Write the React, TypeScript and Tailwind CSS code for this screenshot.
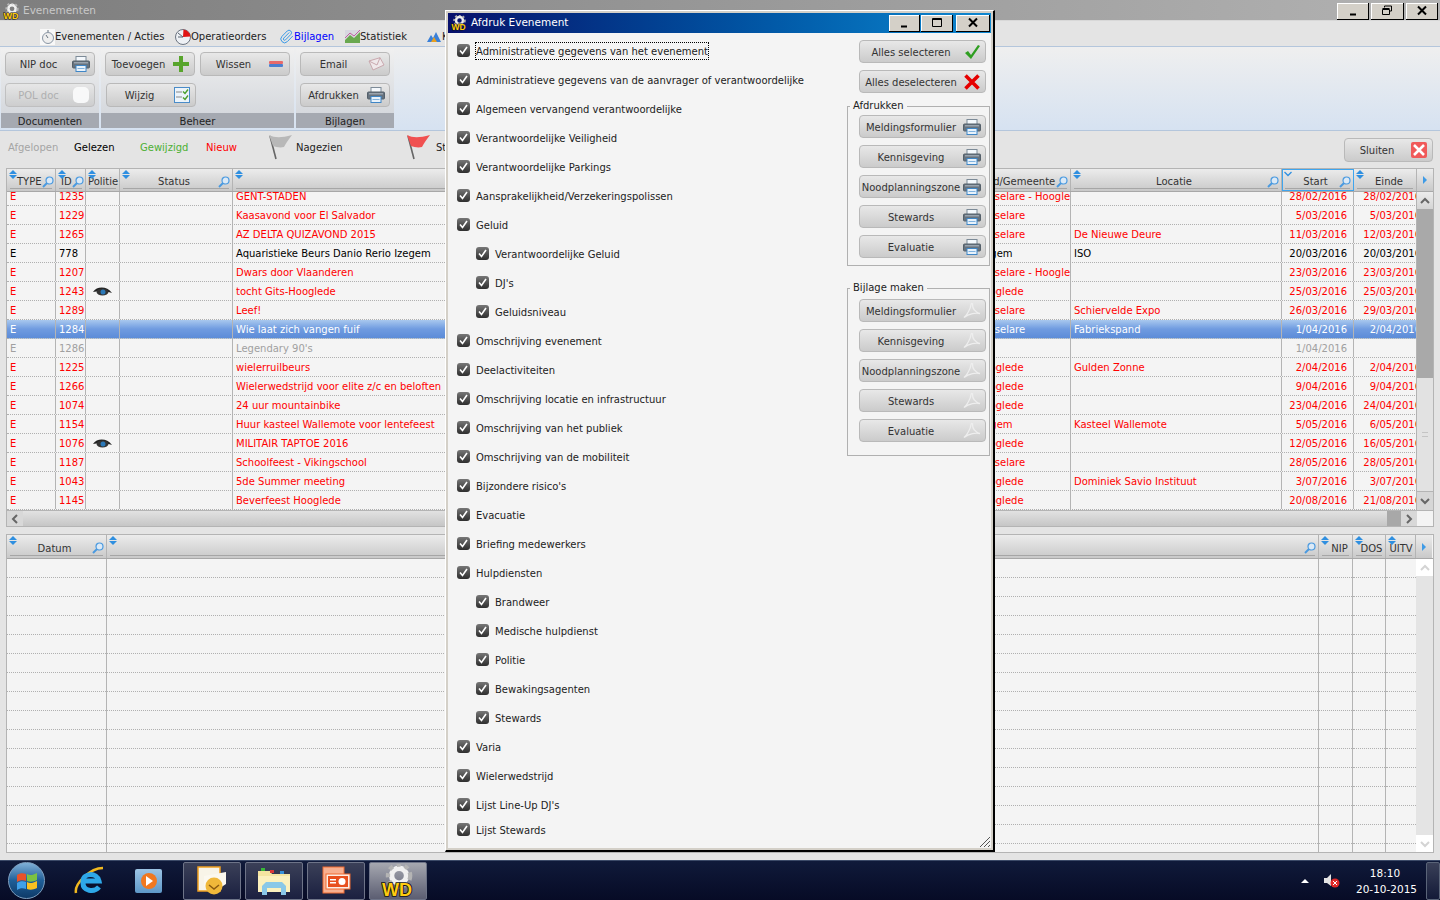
import React from 'react';
import { Paperclip } from 'lucide-react';

type Tone = 'red' | 'black' | 'grey' | 'sel';

const ROWS: { id: string; title: string; city: string; loc: string; start: string; end: string; tone: Tone; eye?: boolean }[] = [
  { id: '1235', title: 'GENT-STADEN', city: 'Roeselare - Hooglede', loc: '', start: '28/02/2016', end: '28/02/2016', tone: 'red' },
  { id: '1229', title: 'Kaasavond voor El Salvador', city: 'Roeselare', loc: '', start: '5/03/2016', end: '5/03/2016', tone: 'red' },
  { id: '1265', title: 'AZ DELTA QUIZAVOND 2015', city: 'Roeselare', loc: 'De Nieuwe Deure', start: '11/03/2016', end: '12/03/2016', tone: 'red' },
  { id: '778', title: 'Aquaristieke Beurs Danio Rerio Izegem', city: 'Izegem', loc: 'ISO', start: '20/03/2016', end: '20/03/2016', tone: 'black' },
  { id: '1207', title: 'Dwars door Vlaanderen', city: 'Roeselare - Hooglede', loc: '', start: '23/03/2016', end: '23/03/2016', tone: 'red' },
  { id: '1243', title: 'tocht Gits-Hooglede', city: 'Hooglede', loc: '', start: '25/03/2016', end: '25/03/2016', tone: 'red', eye: true },
  { id: '1289', title: 'Leef!', city: 'Roeselare', loc: 'Schiervelde Expo', start: '26/03/2016', end: '29/03/2016', tone: 'red' },
  { id: '1284', title: 'Wie laat zich vangen fuif', city: 'Roeselare', loc: 'Fabriekspand', start: '1/04/2016', end: '2/04/2016', tone: 'sel' },
  { id: '1286', title: "Legendary 90's", city: '', loc: '', start: '1/04/2016', end: '', tone: 'grey' },
  { id: '1225', title: 'wielerruilbeurs', city: 'Hooglede', loc: 'Gulden Zonne', start: '2/04/2016', end: '2/04/2016', tone: 'red' },
  { id: '1266', title: 'Wielerwedstrijd voor elite z/c en beloften', city: 'Hooglede', loc: '', start: '9/04/2016', end: '9/04/2016', tone: 'red' },
  { id: '1074', title: '24 uur mountainbike', city: 'Hooglede', loc: '', start: '23/04/2016', end: '24/04/2016', tone: 'red' },
  { id: '1154', title: 'Huur kasteel Wallemote voor lentefeest', city: 'Izegem', loc: 'Kasteel Wallemote', start: '5/05/2016', end: '6/05/2016', tone: 'red' },
  { id: '1076', title: 'MILITAIR TAPTOE 2016', city: 'Hooglede', loc: '', start: '12/05/2016', end: '16/05/2016', tone: 'red', eye: true },
  { id: '1187', title: 'Schoolfeest - Vikingschool', city: 'Roeselare', loc: '', start: '28/05/2016', end: '28/05/2016', tone: 'red' },
  { id: '1043', title: '5de Summer meeting', city: 'Hooglede', loc: 'Dominiek Savio Instituut', start: '3/07/2016', end: '3/07/2016', tone: 'red' },
  { id: '1145', title: 'Beverfeest Hooglede', city: 'Hooglede', loc: '', start: '20/08/2016', end: '21/08/2016', tone: 'red' },
];

const CHECKS: { label: string; sub?: boolean }[] = [
  { label: 'Administratieve gegevens van het evenement' },
  { label: 'Administratieve gegevens van de aanvrager of verantwoordelijke' },
  { label: 'Algemeen vervangend verantwoordelijke' },
  { label: 'Verantwoordelijke Veiligheid' },
  { label: 'Verantwoordelijke Parkings' },
  { label: 'Aansprakelijkheid/Verzekeringspolissen' },
  { label: 'Geluid' },
  { label: 'Verantwoordelijke Geluid', sub: true },
  { label: "DJ's", sub: true },
  { label: 'Geluidsniveau', sub: true },
  { label: 'Omschrijving evenement' },
  { label: 'Deelactiviteiten' },
  { label: 'Omschrijving locatie en infrastructuur' },
  { label: 'Omschrijving van het publiek' },
  { label: 'Omschrijving van de mobiliteit' },
  { label: "Bijzondere risico's" },
  { label: 'Evacuatie' },
  { label: 'Briefing medewerkers' },
  { label: 'Hulpdiensten' },
  { label: 'Brandweer', sub: true },
  { label: 'Medische hulpdienst', sub: true },
  { label: 'Politie', sub: true },
  { label: 'Bewakingsagenten', sub: true },
  { label: 'Stewards', sub: true },
  { label: 'Varia' },
  { label: 'Wielerwedstrijd' },
  { label: "Lijst Line-Up DJ's" },
];

const FORMS = ['Meldingsformulier', 'Kennisgeving', 'Noodplanningszone', 'Stewards', 'Evaluatie'];

const toneClass: Record<Tone, string> = {
  red: 'text-[#ff0000]',
  black: 'text-black',
  grey: 'text-[#a0a0a0]',
  sel: 'text-white bg-gradient-to-b from-[#a9c8ee] via-[#6f9be0] to-[#5c8cd8]',
};

function Printer() {
  return (
    <svg width="18" height="16" viewBox="0 0 18 16">
      <rect x="4" y="0.5" width="10" height="5" fill="#f4f8fc" stroke="#7d8b98" />
      <rect x="0.5" y="5" width="17" height="7" rx="1" fill="#66727e" stroke="#55606a" />
      <rect x="2" y="6" width="14" height="1.5" fill="#9aa4ae" />
      <rect x="4" y="9.5" width="10" height="6" fill="#e8f2fb" stroke="#3f86c6" />
      <rect x="5.5" y="12" width="7" height="1" fill="#7fb2de" />
    </svg>
  );
}

function Acrobat() {
  return (
    <svg width="18" height="17" viewBox="0 0 18 17" fill="none">
      <path d="M1 15.5C4 13 7.5 7 8 2.5 8.2 0.8 9.8 1 9.6 3 9.3 6 12 10 17 11.5 13 10.5 6 11.5 1 15.5Z" stroke="#eeeeee" strokeWidth="1.3" />
    </svg>
  );
}

// gear with the yellow WD letters, used in both title bars and the taskbar
function WdLogo({ size = 16 }: { size?: number }) {
  return (
    <svg width={size} height={size} viewBox="0 0 32 32">
      <circle cx="17" cy="11" r="7" fill="none" stroke="#f0f0f0" strokeWidth="5" />
      <circle cx="17" cy="11" r="10.5" fill="none" stroke="#b4b4b4" strokeWidth="4" strokeDasharray="4 3.8" />
      <text x="1" y="30" fontFamily="Liberation Sans, sans-serif" fontWeight="700" fontSize="17" fill="#ffcc10" stroke="#111111" strokeWidth="1.6" paintOrder="stroke">WD</text>
    </svg>
  );
}

function Btn({ label, icon, className = '', disabled }: { label: string; icon?: React.ReactNode; className?: string; disabled?: boolean }) {
  return (
    <div className={`flex items-center rounded-[4px] border border-[#b9b9b9] bg-gradient-to-b from-[#e8e8e8] to-[#cbcbcb] pr-[3px] ${disabled ? 'text-[#a4a4a4] opacity-80' : 'text-[#333333]'} ${className}`}>
      <span className="flex-1 whitespace-nowrap pt-px text-center">{label}</span>
      {icon && <span className="flex w-[20px] shrink-0 justify-center">{icon}</span>}
    </div>
  );
}

function SortArrows({ active }: { active?: boolean }) {
  return (
    <svg width="8" height="9" viewBox="0 0 8 9" fill="none" className="absolute left-[2px] top-[1px]">
      {active ? (
        <path d="M0.5 2 4 5.5 7.5 2" stroke="#2f8fe0" strokeWidth="1.3" />
      ) : (
        <>
          <path d="M4 0 8 4H0Z" fill="#2f8fe0" />
          <path d="M4 9 0 5H8Z" fill="#2f8fe0" />
        </>
      )}
    </svg>
  );
}

function Lens() {
  return (
    <svg width="12" height="12" viewBox="0 0 12 12" fill="none" className="shrink-0">
      <circle cx="7.5" cy="4.5" r="3.5" fill="#dbe9f6" stroke="#4a9ae0" strokeWidth="1.2" />
      <path d="M5 7 1 11" stroke="#4a9ae0" strokeWidth="2" />
    </svg>
  );
}

function HeadCell({ label, lens = true, active, pad = 'pl-[10px]' }: { label?: string; lens?: boolean; active?: boolean; pad?: string }) {
  return (
    <div className={`relative flex h-full items-center overflow-hidden border-r border-[#b4b4b4] bg-gradient-to-b from-[#ececec] to-[#c9c9c9] pr-[2px] pt-[3px] text-[#333333] ${pad} ${active ? 'outline outline-1 -outline-offset-1 outline-[#3fa5ee]' : ''}`}>
      <SortArrows active={active} />
      <span className="flex-1 whitespace-nowrap text-center">{label}</span>
      {lens && <Lens />}
      <span className="absolute bottom-[2px] left-[3px] right-[3px] h-px bg-[#a6a6a6]" />
    </div>
  );
}

function HeadEnd() {
  return (
    <div className="relative flex h-full w-[16px] items-center justify-center bg-gradient-to-b from-[#ececec] to-[#c9c9c9]">
      <span className="h-0 w-0 border-y-[4px] border-l-[4px] border-y-transparent border-l-[#3f9be6]" />
    </div>
  );
}

function Chevron({ dir, light }: { dir: 'up' | 'down' | 'left' | 'right'; light?: boolean }) {
  const d = { up: 'M2 8 6 4l4 4', down: 'M2 4l4 4 4-4', left: 'M8 2 4 6l4 4', right: 'M4 2l4 4-4 4' }[dir];
  return (
    <svg width="12" height="12" viewBox="0 0 12 12" fill="none">
      <path d={d} stroke={light ? '#d4d4d4' : '#666666'} strokeWidth="2" />
    </svg>
  );
}

function CheckRow({ label, sub, focus, className = '' }: { label: string; sub?: boolean; focus?: boolean; className?: string }) {
  return (
    <div className={`flex h-[29px] items-center ${sub ? 'pl-[19px]' : ''} ${className}`}>
      <span className="flex h-[13px] w-[13px] items-center justify-center rounded-[3px] bg-gradient-to-b from-[#777777] to-[#2f2f2f]">
        <svg width="9" height="9" viewBox="0 0 9 9" fill="none">
          <path d="M1 4.5 3.5 7.5 8 1" stroke="#ffffff" strokeWidth="1.6" />
        </svg>
      </span>
      <span className={`ml-[6px] whitespace-nowrap pt-px text-[#222222] ${focus ? 'outline outline-1 outline-dotted outline-black' : ''}`}>{label}</span>
    </div>
  );
}

function WinBtn({ kind, className = '' }: { kind: 'min' | 'max' | 'restore' | 'close'; className?: string }) {
  return (
    <div className={`flex h-[17px] items-center justify-center border-r border-b border-black bg-[#d4d0c8] shadow-[inset_1px_1px_0_#ffffff] ${className}`}>
      <svg width="12" height="11" viewBox="0 0 12 11" fill="none" stroke="#000000">
        {kind === 'min' && <path d="M3 9.5h6" strokeWidth="2" />}
        {kind === 'max' && <path d="M1.5 1.5h9v8h-9zM1.5 2.5h9" />}
        {kind === 'restore' && <path d="M3.5 2.5v-1.5h7v5h-2M1.5 4.5h7v5h-7zM1.5 3.5h7" />}
        {kind === 'close' && <path d="M2 1.5 10 9.5M10 1.5 2 9.5" strokeWidth="2" />}
      </svg>
    </div>
  );
}

function Flag({ color, pole }: { color: string; pole: string }) {
  return (
    <svg width="24" height="26" viewBox="0 0 24 26" fill="none">
      <path d="M8 25 2 2" stroke={pole} strokeWidth="1.6" />
      <path d="M1 1C7 4 13 4 24 1 21 5 18 9 16 13 12 14 8 13 5 12Z" fill={color} />
    </svg>
  );
}

function Tile({ active, children }: { active?: boolean; children: React.ReactNode }) {
  return (
    <div className={`flex h-[38px] w-[58px] items-center justify-center rounded-[2px] border border-[#6e7488] ${active ? 'bg-gradient-to-b from-[#a6a8b0] to-[#5c5e72]' : 'bg-gradient-to-b from-[#3b4058] to-[#1b2040]'}`}>
      {children}
    </div>
  );
}

function GroupBox({ title, className = '', children }: { title: string; className?: string; children: React.ReactNode }) {
  return (
    <fieldset className={`w-[143px] border border-[#b0b0b0] pl-[11px] ${className}`}>
      <legend className="-ml-[9px] h-[14px] px-[3px] leading-[14px] text-[#222222]">{title}</legend>
      <div className="flex flex-col gap-[7px]">{children}</div>
    </fieldset>
  );
}

function RibbonGroup({ title, width, children }: { title: string; width: string; children: React.ReactNode }) {
  return (
    <div className={`flex h-[79px] flex-col ${width} bg-gradient-to-b from-[#f0f0f0] to-[#cfd3d9]`}>
      <div className="flex flex-1 flex-col gap-[7px] pl-[4px] pt-[3px]">{children}</div>
      <div className="flex h-[15px] items-center justify-center bg-[#a5a9b1] pt-px text-[#222222]">{title}</div>
    </div>
  );
}

function Cell({ className = '', children }: { className?: string; children?: React.ReactNode }) {
  return <div className={`flex overflow-hidden whitespace-nowrap border-r border-[#b4b4b4] pl-[3px] ${className}`}>{children}</div>;
}

export default function App() {
  const cols1 = 'grid grid-cols-[49px_30px_34px_113px_740px_98px_211px_72px_63px]';
  const cols2 = 'grid w-[1409px] grid-cols-[100px_1212px_34px_33px_30px]';
  return (
    <div className="relative flex h-[900px] w-[1440px] flex-col overflow-hidden bg-[#e4e4e4] font-['DejaVu_Sans',sans-serif] text-[10px]">
      {/* main window title */}
      <div className="flex h-[21px] items-center border-b border-[#d8d8d8] bg-gradient-to-r from-[#7e7e7e] to-[#b2b2b2] pl-[3px] pt-[2px]">
        <WdLogo size={17} />
        <span className="ml-[3px] text-[10.5px] text-[#c8c8c8]">Evenementen</span>
        <div className="ml-auto mr-[2px] flex gap-[2px]">
          <WinBtn kind="min" className="w-[32px]" />
          <WinBtn kind="restore" className="w-[33px]" />
          <WinBtn kind="close" className="w-[32px]" />
        </div>
      </div>

      {/* tabs */}
      <div className="flex h-[25px] items-center pl-[40px] pt-[6px] text-[#222222]">
        <svg width="15" height="16" viewBox="0 0 15 16" fill="none" className="bg-[#f8f8f8]">
          <circle cx="8" cy="9" r="5.5" fill="#eeeeee" stroke="#8a96a4" />
          <path d="M8 9 6 6M7 2h2" stroke="#66727e" />
        </svg>
        <span className="w-[120px]">Evenementen / Acties</span>
        <svg width="16" height="16" viewBox="0 0 16 16" className="shrink-0">
          <circle cx="8" cy="8" r="7.5" fill="#eef1f5" stroke="#6c7480" />
          <path d="M8 8 8.5 0.6A7.5 7.5 0 0 1 15.4 7.5Z" fill="#e01414" />
          <path d="M8 8 3 4M8 8h-5" stroke="#5a6470" />
        </svg>
        <span className="w-[88px]">Operatieorders</span>
        <Paperclip size={15} color="#3a9ae8" strokeWidth={1.6} className="shrink-0" />
        <span className="w-[51px] text-[#0000ff]">Bijlagen</span>
        <svg width="15" height="13" viewBox="0 0 15 13" className="shrink-0">
          <rect width="15" height="13" fill="#d8d8e0" />
          <path d="M0 10 5 5 9 8 15 2V13H0Z" fill="#6aa84f" />
          <path d="M0 8 5 3 9 6 15 0" stroke="#c060a0" fill="none" />
        </svg>
        <span className="w-[66px]">Statistiek</span>
        <svg width="16" height="13" viewBox="0 0 16 13" className="shrink-0">
          <path d="M1 12 5 5l2 3 3-6 5 10Z" fill="#3a80d8" />
          <path d="M5 12 8 7l3 5Z" fill="#e8a020" />
        </svg>
        <span>Kaarten</span>
      </div>

      {/* ribbon */}
      <div className="flex h-[85px] gap-[2px] border-y border-[#b4c6dc] bg-gradient-to-b from-[#efefef] to-[#d6e2f1] pl-[1px] pt-[2px]">
        <RibbonGroup title="Documenten" width="w-[98px]">
          <Btn label="NIP doc" icon={<Printer />} className="h-[24px] w-[90px]" />
          <Btn label="POL doc" disabled icon={<span className="block h-[16px] w-[16px] rounded-[5px] bg-white" />} className="h-[24px] w-[90px]" />
        </RibbonGroup>
        <RibbonGroup title="Beheer" width="w-[193px]">
          <div className="flex gap-[5px]">
            <Btn
              label="Toevoegen"
              className="h-[24px] w-[90px]"
              icon={
                <svg width="16" height="16" viewBox="0 0 16 16">
                  <path d="M6 0h4v6h6v4h-6v6H6v-6H0V6h6Z" fill="#58a52c" />
                </svg>
              }
            />
            <Btn
              label="Wissen"
              className="h-[24px] w-[90px]"
              icon={
                <svg width="14" height="6" viewBox="0 0 14 6">
                  <rect width="14" height="3" rx="1" fill="#e86a6a" />
                  <rect y="3" width="14" height="3" rx="1" fill="#4a7fd0" />
                </svg>
              }
            />
          </div>
          <Btn
            label="Wijzig"
            className="ml-px h-[24px] w-[90px]"
            icon={
              <svg width="16" height="16" viewBox="0 0 16 16" fill="none">
                <rect x="0.5" y="0.5" width="15" height="15" fill="#ecf4fb" stroke="#4a8cc8" />
                <path d="M2 5h6M2 10h6" stroke="#888888" />
                <path d="M9 4.5l2 2 3-4M9 10.5l2 2 3-4" stroke="#4aa02c" strokeWidth="1.4" />
              </svg>
            }
          />
        </RibbonGroup>
        <RibbonGroup title="Bijlagen" width="w-[98px]">
          <Btn
            label="Email"
            className="h-[24px] w-[90px]"
            icon={
              <svg width="17" height="14" viewBox="0 0 17 14" fill="none">
                <path d="M1 4 12 0.7 16 8 5 13Z" fill="#efe8ea" stroke="#c9a8ae" />
                <path d="M1 4 9 8 12 0.7" stroke="#c9a8ae" />
              </svg>
            }
          />
          <Btn label="Afdrukken" icon={<Printer />} className="h-[24px] w-[90px]" />
        </RibbonGroup>
      </div>

      {/* legend row */}
      <div className="flex h-[37px] items-center pl-[8px]">
        <div className="flex h-full items-center pb-[5px]">
          <span className="w-[66px] text-[#a4a4a4]">Afgelopen</span>
          <span className="w-[66px] text-black">Gelezen</span>
          <span className="w-[66px] text-[#4cb034]">Gewijzigd</span>
          <span className="w-[62px] text-[#ff0000]">Nieuw</span>
          <Flag color="#b8b8b8" pole="#666666" />
          <span className="ml-[4px] w-[110px] text-[#222222]">Nagezien</span>
          <Flag color="#f05050" pole="#666666" />
          <span className="ml-[6px] text-[#222222]">Status</span>
        </div>
        <Btn
          label="Sluiten"
          className="ml-auto mr-[7px] mt-px h-[24px] w-[89px]"
          icon={
            <span className="flex h-[16px] w-[16px] items-center justify-center rounded-[2px] bg-[#f05a5a]">
              <svg width="12" height="12" viewBox="0 0 12 12">
                <path d="M1 1 11 11M11 1 1 11" stroke="#ffffff" strokeWidth="2.6" />
              </svg>
            </span>
          }
        />
      </div>

      {/* events table */}
      <div className="ml-[6px] flex h-[359px] w-[1428px] flex-col border border-[#b4b4b4] bg-[#f4f4f4]">
        <div className="flex h-[23px] shrink-0 border-b border-[#a8a8a8]">
          <div className={`${cols1} w-[1410px]`}>
            <HeadCell label="TYPE" />
            <HeadCell label="ID" pad="pl-[5px]" />
            <HeadCell label="Politie" lens={false} pad="pl-[2px]" />
            <HeadCell label="Status" />
            <HeadCell />
            <HeadCell label="Stad/Gemeente" pad="pl-[3px]" />
            <HeadCell label="Locatie" />
            <HeadCell label="Start" active />
            <HeadCell label="Einde" lens={false} />
          </div>
          <HeadEnd />
        </div>
        <div className="flex h-[318px] shrink-0 overflow-hidden">
          <div className="w-[1410px] overflow-hidden">
            <div className="-mt-[5px]">
              {ROWS.map((r) => (
                <div key={r.id} className={`${cols1} h-[19px] border-b border-dotted border-[#b0b0b0] leading-[20px] ${toneClass[r.tone]}`}>
                  <Cell>E</Cell>
                  <Cell>{r.id}</Cell>
                  <Cell className="pl-[7px]">
                    {r.eye && (
                      <svg width="19" height="9" viewBox="0 0 19 9" className="mt-[5px]">
                        <path d="M0 5C4 -1 14 -1 19 6 14 4 5 4 0 5Z" fill="#222222" />
                        <ellipse cx="9.5" cy="5" rx="6" ry="3.5" fill="#333333" />
                        <circle cx="10" cy="5" r="2.5" fill="#2a78b8" />
                      </svg>
                    )}
                  </Cell>
                  <Cell />
                  <Cell>{r.title}</Cell>
                  <Cell>{r.city}</Cell>
                  <Cell>{r.loc}</Cell>
                  <Cell className="justify-end pr-[6px]">{r.start}</Cell>
                  <Cell>
                    <span className="-ml-[3px] block w-[67px] shrink-0 text-right">{r.end}</span>
                  </Cell>
                </div>
              ))}
            </div>
          </div>
          <div className="flex w-[16px] flex-col">
            <div className="flex h-[17px] items-center justify-center bg-gradient-to-b from-[#ececec] to-[#d4d4d4]">
              <Chevron dir="up" />
            </div>
            <div className="h-[169px] bg-[#a9a9a9]" />
            <div className="flex flex-1 items-center justify-center bg-[#e2e2e2]">
              <span className="h-[5px] w-[6px] border-y border-[#c4c4c4]" />
            </div>
            <div className="flex h-[19px] items-center justify-center border-t border-[#b4b4b4] bg-[#d6d6d6]">
              <Chevron dir="down" />
            </div>
          </div>
        </div>
        <div className="flex h-[16px] border-t border-[#b4b4b4]">
          <div className="flex w-[16px] items-center justify-center bg-[#d8d8d8]">
            <Chevron dir="left" />
          </div>
          <div className="w-[1364px] bg-gradient-to-b from-[#e2e2e2] to-[#c6c6c6]" />
          <div className="w-[14px] bg-[#a8a8a8]" />
          <div className="flex w-[16px] items-center justify-center bg-[#d8d8d8]">
            <Chevron dir="right" />
          </div>
        </div>
      </div>

      {/* bijlagen table */}
      <div className="ml-[6px] mt-[7px] flex h-[319px] w-[1428px] flex-col border border-[#b4b4b4] bg-[#f4f4f4]">
        <div className="flex h-[24px] shrink-0 border-b border-[#a8a8a8]">
          <div className={cols2}>
            <HeadCell label="Datum" />
            <HeadCell />
            <HeadCell label="NIP" lens={false} />
            <HeadCell label="DOS" lens={false} pad="pl-[7px]" />
            <HeadCell label="UITV" lens={false} pad="pl-[3px]" />
          </div>
          <HeadEnd />
        </div>
        <div className="flex min-h-0 flex-1 overflow-hidden">
          <div className={cols2}>
            {[100, 1212, 34, 33, 30].map((w, i) => (
              <div key={w + i} className={i < 4 ? 'overflow-hidden border-r border-[#b4b4b4]' : 'overflow-hidden'}>
                {Array.from({ length: 15 }).map((_, j) => (
                  <div key={j} className="h-[19px] border-b border-dotted border-[#b0b0b0]" />
                ))}
              </div>
            ))}
          </div>
          <div className="flex w-[17px] flex-col bg-[#e4e4e4]">
            <div className="flex h-[17px] items-center justify-center bg-white">
              <Chevron dir="up" light />
            </div>
            <div className="flex-1" />
            <div className="flex h-[17px] items-center justify-center bg-white">
              <Chevron dir="down" light />
            </div>
          </div>
        </div>
      </div>

      {/* taskbar */}
      <div className="mt-[7px] flex h-[40px] items-center border-t border-[#3c4a68] bg-gradient-to-b from-[#101a3a] to-[#070b26] pl-[8px] text-white">
        <div className="flex h-[37px] w-[37px] items-center justify-center rounded-full border border-[#7fa0c0] bg-gradient-to-b from-[#7fb0d8] via-[#1f5f98] to-[#0e3a68]">
          <svg width="22" height="20" viewBox="0 0 22 20">
            <path d="M1 4C4 2 7 2 10 3V10C7 9 4 9 1 11Z" fill="#e8522a" />
            <path d="M11 3C14 5 17 4 21 2V9C17 11 14 11 11 10Z" fill="#7cc242" />
            <path d="M1 12C4 10 7 10 10 11V18C7 17 4 17 1 19Z" fill="#3fa0e8" />
            <path d="M11 11C14 13 17 12 21 10V17C17 19 14 19 11 18Z" fill="#f8c020" />
          </svg>
        </div>
        <div className="ml-[29px] flex h-[38px] w-[32px] items-center justify-center">
          <svg width="32" height="34" viewBox="0 0 32 34" fill="none">
            <path d="M2 29C0 20 16 4 29 4" stroke="#f0b820" strokeWidth="2.5" />
            <path d="M25 17H9C9 9 23 8 25 17ZM9 19C9 27 20 29 25 23" stroke="#2ea8e8" strokeWidth="5" />
          </svg>
        </div>
        <div className="ml-[29px] flex h-[24px] w-[27px] items-center justify-center rounded-[2px] bg-gradient-to-b from-[#9cc4e4] to-[#5e98c8]">
          <span className="flex h-[16px] w-[16px] items-center justify-center rounded-full bg-[#f07820]">
            <span className="ml-[2px] h-0 w-0 border-y-[5px] border-l-[7px] border-y-transparent border-l-white" />
          </span>
        </div>
        <div className="ml-[21px] flex gap-[4px]">
          <Tile>
            <svg width="32" height="30" viewBox="0 0 32 30">
              <rect x="2" y="1" width="22" height="24" fill="#f8f4e8" stroke="#f0a020" strokeWidth="1.5" />
              <path d="M8 10 30 6V18L18 26 8 20Z" fill="#fbf8ef" />
              <circle cx="18" cy="20" r="8.5" fill="#f0b83a" />
              <path d="M13 19l5 4 5-4" fill="none" stroke="#8a5a10" strokeWidth="1.5" />
            </svg>
          </Tile>
          <Tile>
            <svg width="34" height="30" viewBox="0 0 34 30">
              <path d="M1 5h12l2 3h18v18H1Z" fill="#f4e4a0" />
              <path d="M1 10h32v16H1Z" fill="#fbf0bd" />
              <rect x="4" y="2" width="4" height="3" fill="#38b838" />
              <rect x="13" y="4" width="4" height="3" fill="#d83838" />
              <rect x="23" y="5" width="4" height="3" fill="#3890d8" />
              <path d="M5 29V20L9 16H25L29 20V29H24V22H10V29Z" fill="#8ac8e8" />
            </svg>
          </Tile>
          <Tile>
            <svg width="32" height="30" viewBox="0 0 32 30">
              <rect x="3" y="1" width="21" height="26" fill="#f8b090" stroke="#f06a30" />
              <rect x="6" y="8" width="24" height="15" fill="#fbeee6" stroke="#f06a30" />
              <rect x="8" y="10" width="20" height="11" fill="#e8501e" />
              <rect x="10" y="13" width="6" height="1.5" fill="#ffffff" />
              <rect x="10" y="16" width="6" height="1.5" fill="#ffffff" />
              <circle cx="22" cy="15.5" r="3.5" fill="#ffffff" />
            </svg>
          </Tile>
          <Tile active>
            <WdLogo size={34} />
          </Tile>
        </div>
        <div className="ml-auto flex items-center">
          <svg width="8" height="4" viewBox="0 0 8 4" className="mr-[15px]">
            <path d="M4 0 8 4H0Z" fill="#ffffff" />
          </svg>
          <svg width="16" height="14" viewBox="0 0 16 14" className="mr-[16px]">
            <path d="M0 4h3l4-4v12L3 9H0Z" fill="#e4e4e4" />
            <circle cx="11" cy="9" r="4.5" fill="#e02828" />
            <path d="M9 7l4 4M13 7l-4 4" stroke="#ffffff" />
          </svg>
          <div className="w-[58px] text-center text-[10.5px] leading-[16px] text-white">
            <div>18:10</div>
            <div className="whitespace-nowrap">20-10-2015</div>
          </div>
          <div className="ml-[12px] h-[38px] w-[14px] rounded-[2px] border border-[#5a6478] bg-gradient-to-b from-[#3a4058] to-[#141a38]" />
        </div>
      </div>

      {/* print dialog */}
      <div className="absolute left-[445px] top-[10px] flex h-[842px] w-[550px] flex-col border-b-2 border-l border-r-2 border-t border-b-black border-l-white border-r-black border-t-white bg-[#d4d0c8] p-[2px]">
        <div className="flex h-[20px] shrink-0 items-center bg-gradient-to-r from-[#08106c] to-[#1088d0] pl-[3px] pr-[1px] text-white">
          <WdLogo size={16} />
          <span className="ml-[4px] text-[10.5px]">Afdruk Evenement</span>
          <div className="ml-auto flex gap-[1px]">
            <WinBtn kind="min" className="w-[31px]" />
            <WinBtn kind="max" className="w-[32px]" />
            <WinBtn kind="close" className="ml-[2px] w-[34px]" />
          </div>
        </div>
        <div className="relative flex min-h-0 flex-1 justify-between bg-[#f4f4f4]">
          <div className="pl-[9px] pt-[3px]">
            {CHECKS.map((c, i) => (
              <CheckRow key={c.label} label={c.label} sub={c.sub} focus={i === 0} />
            ))}
            <CheckRow label="Lijst Stewards" className="-mt-[4px]" />
          </div>
          <div className="mr-px w-[143px] pt-[7px]">
            <div className="flex flex-col gap-[7px] pl-[12px]">
              <Btn
                label="Alles selecteren"
                className="h-[23px] w-[127px]"
                icon={
                  <svg width="16" height="16" viewBox="0 0 16 16">
                    <path d="M1 9 4 7 7 11 14 1 16 2 7 15Z" fill="#2e9e20" />
                  </svg>
                }
              />
              <Btn
                label="Alles deselecteren"
                className="h-[23px] w-[127px]"
                icon={
                  <svg width="16" height="16" viewBox="0 0 16 16">
                    <path d="M1.5 1.5 14.5 14.5M14.5 1.5 1.5 14.5" stroke="#e60000" strokeWidth="3.6" />
                  </svg>
                }
              />
            </div>
            <GroupBox title="Afdrukken" className="mt-[6px] pb-[7px] pt-[2px]">
              {FORMS.map((f) => (
                <Btn key={f} label={f} icon={<Printer />} className="h-[23px] w-[127px]" />
              ))}
            </GroupBox>
            <GroupBox title="Bijlage maken" className="mt-[15px] pb-[13px] pt-[4px]">
              {FORMS.map((f) => (
                <Btn key={f} label={f} icon={<Acrobat />} className="h-[23px] w-[127px]" />
              ))}
            </GroupBox>
          </div>
          <svg width="10" height="10" viewBox="0 0 10 10" fill="none" className="absolute bottom-[1px] right-[1px]" stroke="#555555">
            <path d="M0 10 10 0M4 10 10 4M8 10 10 8" />
          </svg>
        </div>
      </div>
    </div>
  );
}
